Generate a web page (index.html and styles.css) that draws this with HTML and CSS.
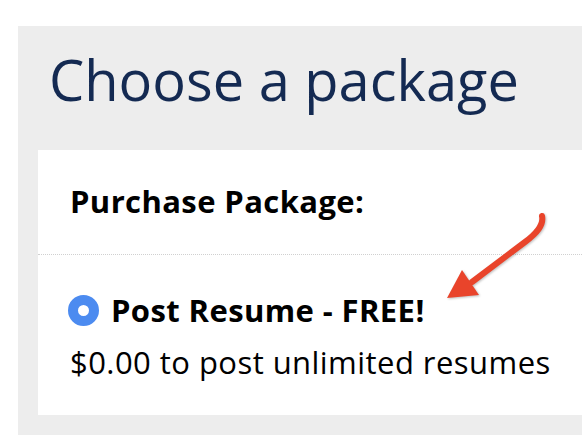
FILE: index.html
```html
<!DOCTYPE html>
<html>
<head>
  <title>Choose a package</title>
  <link rel="stylesheet" href="styles.css">
</head>
<body>
  <div class="panel">
    <h1>Choose a package</h1>

    <div class="card">
      <div class="card-head">
        <h2>Purchase Package:</h2>
      </div>

      <div class="option">
        <label class="option-title">
          <span class="radio"></span>
          Post Resume - FREE!
        </label>
        <p class="option-desc">$0.00 to post unlimited resumes</p>
      </div>

      <!-- annotation arrow -->
      <svg class="arrow" width="112" height="94" viewBox="0 0 112 94">
        <path d="M104 6 C106 15 99 23 87 32 L34 72" fill="none" stroke="#e9442b" stroke-width="6" stroke-linecap="round"/>
        <polygon points="9,88 24,60 41,85" fill="#e9442b"/>
      </svg>
    </div>
  </div>
</body>
</html>
```

FILE: styles.css
```css
/* page */
body {
  font-family: "Open Sans", "DejaVu Sans", sans-serif;
  margin: 0;
  background: #fff;
  color: #000;
}
.panel {
  margin: 26px 0 0 18px;
  padding: 15px 0 20px 20px;
  background: #ededed;
}
h1 {
  color: #142a52;
  font-size: 56px;
  font-weight: 400;
  margin: 0 0 33px 11px;
  line-height: normal;
}
.card {
  position: relative;
  background: #fff;
  padding-bottom: 32px;
}
.card-head {
  padding: 30px 0 32px 32px;
  border-bottom: 1px dotted #d0d0d0;
}
h2 {
  font-size: 31px;
  font-weight: 700;
  letter-spacing: 0.4px;
  margin: 0;
  line-height: normal;
}
.option {
  padding: 34px 0 0 32px;
}
.option-title {
  display: flex;
  align-items: center;
  gap: 12px;
  font-size: 31px;
  font-weight: 700;
  letter-spacing: 0.4px;
  margin-left: -2px;
}
.radio {
  width: 11px;
  height: 11px;
  border: 10px solid #4c8bf0;
  border-radius: 50%;
  background: #fff;
  flex: none;
}
.option-desc {
  font-size: 31px;
  letter-spacing: 0.45px;
  margin: 10px 0 0;
  line-height: normal;
}
/* arrow pointing at the free option */
.arrow {
  position: absolute;
  left: 400px;
  top: 60px;
  filter: drop-shadow(1px 1px 1px rgba(0, 0, 0, 0.25));
}
```
